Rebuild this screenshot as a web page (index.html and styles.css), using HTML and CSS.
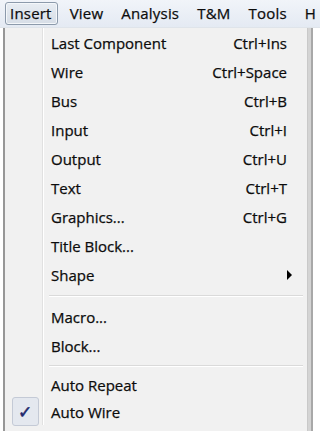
FILE: index.html
```html
<!DOCTYPE html>
<html lang="en">
<head>
  <meta charset="UTF-8" />
  <title>Insert menu</title>
  <link rel="stylesheet" href="styles.css">
</head>
<body>
  <div class="menubar">
    <span class="top-item open">Insert</span>
    <span class="top-item">View</span>
    <span class="top-item">Analysis</span>
    <span class="top-item">T&amp;M</span>
    <span class="top-item">Tools</span>
    <span class="top-item">H</span>
  </div>

  <div class="stage">
    <div class="menu">
      <div class="row"><span class="gutter"></span><span class="label">Last Component</span><span class="key">Ctrl+Ins</span></div>
      <div class="row"><span class="gutter"></span><span class="label">Wire</span><span class="key">Ctrl+Space</span></div>
      <div class="row"><span class="gutter"></span><span class="label">Bus</span><span class="key">Ctrl+B</span></div>
      <div class="row"><span class="gutter"></span><span class="label">Input</span><span class="key">Ctrl+I</span></div>
      <div class="row"><span class="gutter"></span><span class="label">Output</span><span class="key">Ctrl+U</span></div>
      <div class="row"><span class="gutter"></span><span class="label">Text</span><span class="key">Ctrl+T</span></div>
      <div class="row"><span class="gutter"></span><span class="label">Graphics...</span><span class="key">Ctrl+G</span></div>
      <div class="row"><span class="gutter"></span><span class="label">Title Block...</span><span class="key"></span></div>
      <div class="row"><span class="gutter"></span><span class="label">Shape</span><span class="key"><span class="arrow"></span></span></div>
      <div class="sep"><span class="gutter"></span><span class="line"></span></div>
      <div class="row"><span class="gutter"></span><span class="label">Macro...</span><span class="key"></span></div>
      <div class="row"><span class="gutter"></span><span class="label">Block...</span><span class="key"></span></div>
      <div class="sep short"><span class="gutter"></span><span class="line"></span></div>
      <div class="row tight"><span class="gutter"></span><span class="label">Auto Repeat</span><span class="key"></span></div>
      <div class="row tight"><span class="gutter"><span class="check">&#10003;</span></span><span class="label">Auto Wire</span><span class="key"></span></div>
    </div>
    <div class="backdrop"></div>
  </div>
</body>
</html>
```

FILE: styles.css
```css
html, body {
  margin: 0;
  padding: 0;
  width: 320px;
  height: 431px;
  overflow: hidden;
  background: #ffffff;
  font-family: "Open Sans", "Noto Sans", sans-serif;
  font-size: 15px;
  color: #0c0c0c;
  -webkit-text-stroke: 0.25px #0c0c0c;
}

.menubar {
  height: 28px;
  box-sizing: border-box;
  display: flex;
  align-items: center;
  padding-left: 5px;
  background: linear-gradient(#f1f4f9, #e4eaf3);
  border-bottom: 1px solid #dfe4ea;
}

.top-item {
  height: 23px;
  line-height: 21px;
  padding: 0 5px 0 4px;
  margin-right: 7px;
  box-sizing: border-box;
  border: 1px solid transparent;
  letter-spacing: 0.2px;
}

.top-item.open {
  border-color: #8c9aab;
  border-radius: 3px;
  background: linear-gradient(#e8edf3, #d6dde6);
  box-shadow: inset 0 0 0 1px #f4f7fa;
}

.stage {
  display: flex;
  height: 403px;
}

.menu {
  width: 305px;
  margin-left: 3px;
  box-sizing: border-box;
  background: #f1f1f1;
  border-left: 2px solid #979797;
  border-right: 1px solid #c9c9c9;
  box-shadow: 3px 0 0 #d4d4d4, 5px 0 0 #a8a8a8;
  display: flex;
  flex-direction: column;
}

.backdrop {
  flex: 1;
}

.row {
  display: flex;
  align-items: center;
  height: 29px;
}

.row.tight {
  height: 27px;
}

.gutter {
  width: 37px;
  align-self: stretch;
  flex: none;
  margin-right: 8px;
  border-right: 1px solid #e1e1e1;
  box-shadow: 1px 0 0 #ffffff;
  display: flex;
  align-items: center;
  justify-content: center;
}

.label {
  flex: 1;
}

.key {
  padding-right: 20px;
  display: flex;
  align-items: center;
}

.arrow {
  width: 0;
  height: 0;
  border-top: 5px solid transparent;
  border-bottom: 5px solid transparent;
  border-left: 5px solid #000000;
  margin-right: -9px;
}

.sep {
  display: flex;
  height: 13px;
  align-items: center;
}

.sep.short {
  height: 11px;
}

.sep .gutter {
  margin-right: 6px;
}

.sep .line {
  flex: 1;
  height: 1px;
  background: #dadada;
  box-shadow: 0 1px 0 #ffffff;
  margin-right: 4px;
}

.check {
  width: 27px;
  height: 29px;
  box-sizing: border-box;
  border: 1px solid #c4cad6;
  border-radius: 3px;
  background: #e4e8ef;
  color: #1f2a6e;
  -webkit-text-stroke: 0.6px #1f2a6e;
  font-family: "DejaVu Sans", sans-serif;
  font-size: 17px;
  display: flex;
  align-items: center;
  justify-content: center;
  margin-left: 3px;
}
```
